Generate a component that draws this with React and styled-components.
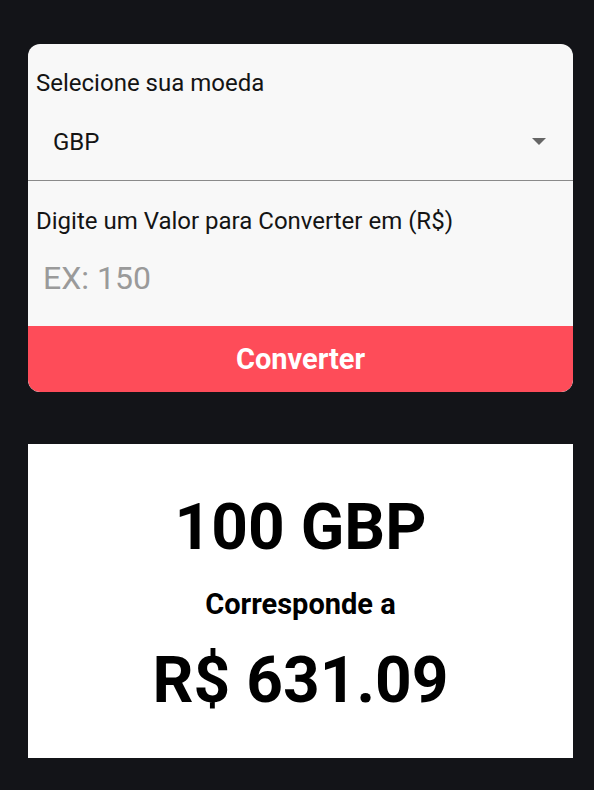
import React from "react";
import styled, { createGlobalStyle } from "styled-components";

const Global = createGlobalStyle`
  html, body { margin: 0; padding: 0; background: #131418; }
  body { font-family: Roboto, "Liberation Sans", sans-serif; }
  * { box-sizing: border-box; }
`;

const Page = styled.div`
  min-height: 790px;
  background: #131418;
  padding: 44px 21px 0 28px;
  display: flex;
  flex-direction: column;
  gap: 52px;
`;

const FormCard = styled.div`
  background: #f8f8f8;
  border-radius: 12px;
  overflow: hidden;
  display: flex;
  flex-direction: column;
`;

const Label = styled.div`
  font-size: 24px;
  line-height: 28px;
  color: #141414;
  padding: ${(p) => p.$pad};
  margin-left: 8px;
`;

const SelectBox = styled.div`
  display: flex;
  align-items: center;
  justify-content: space-between;
  padding: 31px 27px 24px 25px;
  border-bottom: 1px solid #8a8a8a;
  font-size: 24px;
  line-height: 28px;
  color: #141414;
  cursor: pointer;
`;

const Arrow = styled.svg`
  width: 14px;
  height: 7px;
  margin-top: -2px;
`;

const Input = styled.input`
  border: none;
  outline: none;
  background: transparent;
  font-family: Roboto, "Liberation Sans", sans-serif;
  font-size: 32px;
  line-height: 38px;
  height: 38px;
  padding: 0 0 0 15px;
  margin: 24px 0 29px;
  color: #141414;
  &::placeholder { color: #9a9a9a; }
`;

const Button = styled.button`
  border: none;
  background: #fe4c59;
  color: #fff;
  font-family: Roboto, "Liberation Sans", sans-serif;
  font-weight: 700;
  font-size: 29px;
  height: 66px;
  padding: 0;
  border-radius: 0 0 12px 12px;
  cursor: pointer;
`;

const ResultCard = styled.div`
  background: #ffffff;
  height: 314px;
  padding-top: 46px;
  display: flex;
  flex-direction: column;
  align-items: center;
  color: #000;
  font-weight: 700;
`;

const Big = styled.div`
  font-size: 64px;
  line-height: 75px;
  margin-top: ${(p) => p.$mt || 0}px;
`;

const Small = styled.div`
  font-size: 29px;
  line-height: 34px;
  margin-top: 22px;
`;

export default function App() {
  return (
    <>
      <Global />
      <Page>
        <FormCard>
          <Label $pad="25px 0 0 0">Selecione sua moeda</Label>
          <SelectBox>
            <span>GBP</span>
            <Arrow viewBox="0 0 14 7">
              <path d="M0 0 L14 0 L7 7 Z" fill="#666" />
            </Arrow>
          </SelectBox>
          <Label $pad="26px 0 0 0">Digite um Valor para Converter em (R$)</Label>
          <Input placeholder="EX: 150" />
          <Button>Converter</Button>
        </FormCard>
        <ResultCard>
          <Big>100 GBP</Big>
          <Small>Corresponde a</Small>
          <Big $mt={22}>R$ 631.09</Big>
        </ResultCard>
      </Page>
    </>
  );
}
